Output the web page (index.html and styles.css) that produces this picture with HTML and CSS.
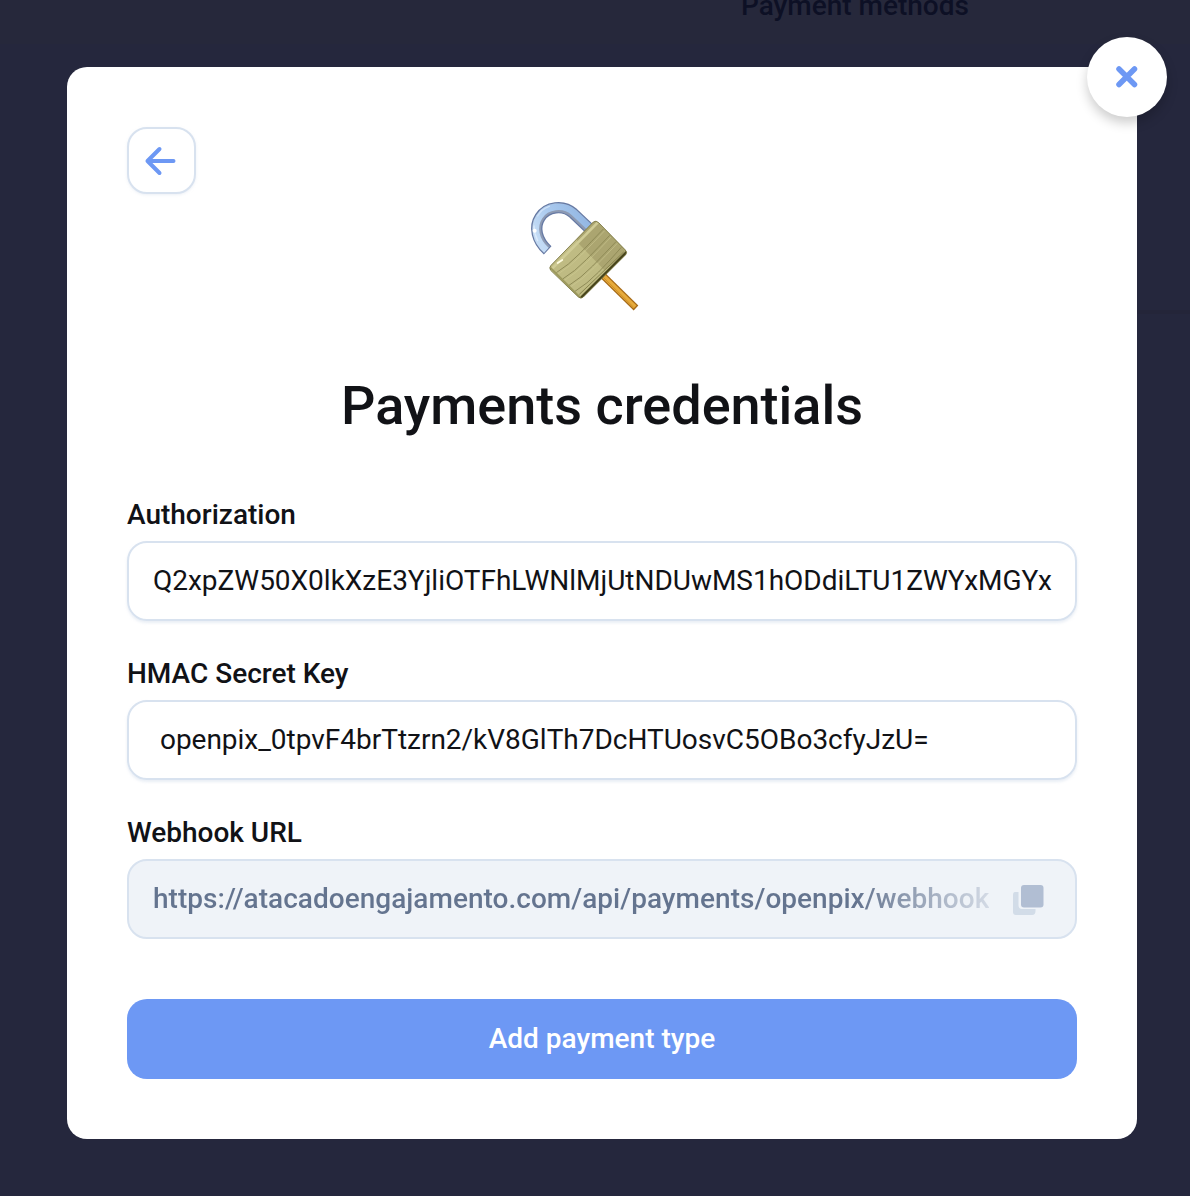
FILE: index.html
```html
<!DOCTYPE html>
<html lang="en">
<head>
<meta charset="utf-8">
<title>Payments credentials</title>
<link rel="stylesheet" href="styles.css">
</head>
<body>
<div class="page">
  <div class="page-heading">Payment methods</div>
  <main class="dialog">
    <button class="close" aria-label="Close">
      <svg width="24" height="24" viewBox="0 0 24 24"><path d="M4 4L19.5 19.5M19.5 4L4 19.5"/></svg>
    </button>
    <button class="back" aria-label="Back">
      <svg width="32" height="30" viewBox="0 0 32 30"><path d="M15.5 3L3.500 15L15.5 27M3.500 15H29.500"/></svg>
    </button>
    <svg class="lock" viewBox="0 0 390 390">
      <defs>
        <linearGradient id="steel" x1="0" y1="0.6" x2="1" y2="0.2"><stop offset="0" stop-color="#c3dbf5"/><stop offset="0.4" stop-color="#a9c9ee"/><stop offset="1" stop-color="#91b5e2"/></linearGradient>
        <clipPath id="body"><path d="M220 96Q228 90 236 98L316 180Q323 187 317 194L190 321Q183 328 175 321L92 241Q86 233 93 226Z"/></clipPath>
      </defs>
      <path d="M250 258L348 354" fill="none" stroke="#a66a16" stroke-width="20"/>
      <path d="M249 257L345 351" fill="none" stroke="#e7ab3c" stroke-width="13"/>
      <path d="M250 262L341 352" fill="none" stroke="#cf9027" stroke-width="3"/>
      <path class="shackle" d="M205 113L160 70C130 43 81 49 60 82C41 111 50 151 83 181" stroke="#6579a4" stroke-width="34"/>
      <path class="shackle" d="M206 114L160 70C130 43 81 49 60 82C41 111 50 151 81 179" stroke="#8d9ab3" stroke-width="27"/>
      <path class="shackle" d="M208 111L162 68C132 40 79 46 58 80C38 111 47 152 79 181" stroke="url(#steel)" stroke-width="20"/>
      <path class="shackle" d="M88 49Q64 57 53 78" stroke="#cfe2f8" stroke-width="4" stroke-linecap="round"/>
      <path class="shackle" d="M42 108Q42 130 53 152" stroke="#dcebfc" stroke-width="4" stroke-linecap="round"/>
      <circle cx="44" cy="122" r="6" fill="#fff"/>
      <g clip-path="url(#body)" fill="none">
        <path d="M80 80H330V335H80Z" fill="#bfbb83"/>
        <path d="M175 160L150 90H235L330 185L253 240Z" fill="#aba570"/>
        <path d="M94 238L233 98" stroke="#d0cc96" stroke-width="8"/>
        <path d="M109 248Q145 226 180 190T250 117M128 267Q164 245 199 209T269 136M147 286Q183 264 218 228T288 155M165 304Q201 282 236 246T304 172" stroke="#8f8b57" stroke-width="3"/>
        <path d="M113 253Q149 231 184 195T254 122M132 272Q168 250 203 214T273 141M151 291Q187 269 222 233T292 160" stroke="#d0cc96" stroke-width="3" opacity=".55"/>
        <path d="M173 328L322 179V196L183 337Z" fill="#47441c"/>
        <path d="M178 313L311 186" stroke="#88844e" stroke-width="3"/>
        <path d="M91 233L181 323" stroke="#9c985c" stroke-width="5"/>
      </g>
      <path d="M220 96Q228 90 236 98L316 180Q323 187 317 194L190 321Q183 328 175 321L92 241Q86 233 93 226Z" fill="none" stroke="#77733f" stroke-width="2.500"/>
      <path d="M113 219L127 210" stroke="#fffde2" stroke-width="5" stroke-linecap="round"/>
    </svg>
    <h1 class="title">Payments credentials</h1>
    <div class="fields">
      <div class="field">
        <div class="label">Authorization</div>
        <div class="input"><span>Q2xpZW50X0lkXzE3YjliOTFhLWNlMjUtNDUwMS1hODdiLTU1ZWYxMGYx</span></div>
      </div>
      <div class="field">
        <div class="label">HMAC Secret Key</div>
        <div class="input"><span> openpix_0tpvF4brTtzrn2/kV8GlTh7DcHTUosvC5OBo3cfyJzU=</span></div>
      </div>
      <div class="field">
        <div class="label">Webhook URL</div>
        <div class="input readonly">
          <span class="url">https://atacadoengajamento.com/api/payments/openpix/webhook</span>
          <svg class="copy" width="32" height="32" viewBox="0 0 32 32"><path fill="#d2dce8" d="M3 8H6.500V21Q6.500 25 10 25H23.500V27Q23.500 31 20 31H4Q1 31 1 28V11Q1 8 3 8Z"/><rect x="9" y="1" width="22.500" height="22.500" rx="3" fill="#b1bed3"/></svg>
        </div>
      </div>
    </div>
    <button class="submit">Add payment type</button>
  </main>
</div>
</body>
</html>
```
FILE: styles.css
```css
* { box-sizing: border-box; }
body { margin: 0; font-family: Roboto, sans-serif; color: #111216; }
button { border: 0; padding: 0; font: inherit; }
.page {
  position: relative;
  height: 1196px;
  padding: 67px 53px 57px 67px;
  background:
    linear-gradient(#242539, #242539) right 310px / 53px 4px no-repeat,
    linear-gradient(#26283b 0 44px, #25273d 44px);
  overflow: hidden;
}
.page-heading {
  position: absolute;
  left: 741px;
  top: -11px;
  font-size: 28px;
  line-height: 33px;
  font-weight: 500;
  color: #0d1025;
  white-space: nowrap;
}
.dialog {
  position: relative;
  display: flex;
  flex-direction: column;
  height: 1072px;
  padding: 60px;
  border-radius: 20px;
  background: #fff;
}
.close {
  position: absolute;
  top: -30px;
  right: -30px;
  display: flex;
  align-items: center;
  justify-content: center;
  width: 80px;
  height: 80px;
  border-radius: 50%;
  background: #fff;
  box-shadow: 0 6px 12px rgba(0, 0, 0, .2);
}
.close path { stroke: #6d98f4; stroke-width: 5.5; stroke-linecap: round; }
.back {
  display: flex;
  align-items: center;
  justify-content: center;
  width: 69px;
  height: 67px;
  padding: 0 3px 0 0;
  border: 2px solid #d8e2ef;
  border-radius: 20px;
  background: #fff;
  box-shadow: 0 1px 3px rgba(200, 213, 230, .35);
}
.back path { fill: none; stroke: #6d98f4; stroke-width: 4; stroke-linecap: round; stroke-linejoin: round; }
.lock { width: 130px; height: 130px; margin: -4px 0 0 393px; flex: none; }
.shackle { fill: none; }
.title {
  margin: 53px 0 59px;
  font-size: 54px;
  line-height: 66px;
  font-weight: 500;
  text-align: center;
  white-space: nowrap;
}
.fields { display: flex; flex-direction: column; gap: 36px; }
.field { display: flex; flex-direction: column; gap: 10px; }
.label { font-size: 28px; line-height: 33px; font-weight: 500; }
.input {
  display: flex;
  align-items: center;
  justify-content: space-between;
  height: 80px;
  padding: 0 24px 2px;
  border: 2px solid #d8e2ef;
  border-radius: 20px;
  box-shadow: 0 2px 3px rgba(200, 213, 230, .4);
  font-size: 28px;
  line-height: 33px;
  letter-spacing: -.015px;
  white-space: pre;
}
.readonly {
  padding-right: 31px;
  background: #eff3f8;
  box-shadow: none;
  font-weight: 500;
  letter-spacing: .025px;
}
.url {
  color: transparent;
  background: linear-gradient(90deg, #64748f 84%, #d3dae5 100%);
  background-clip: text;
}
.copy { flex: none; margin-top: 4px; }
.submit {
  height: 80px;
  margin-top: 60px;
  padding-bottom: 2px;
  border-radius: 20px;
  background: #6d98f4;
  color: #fff;
  font-size: 28px;
  line-height: 33px;
  font-weight: 500;
}
```
